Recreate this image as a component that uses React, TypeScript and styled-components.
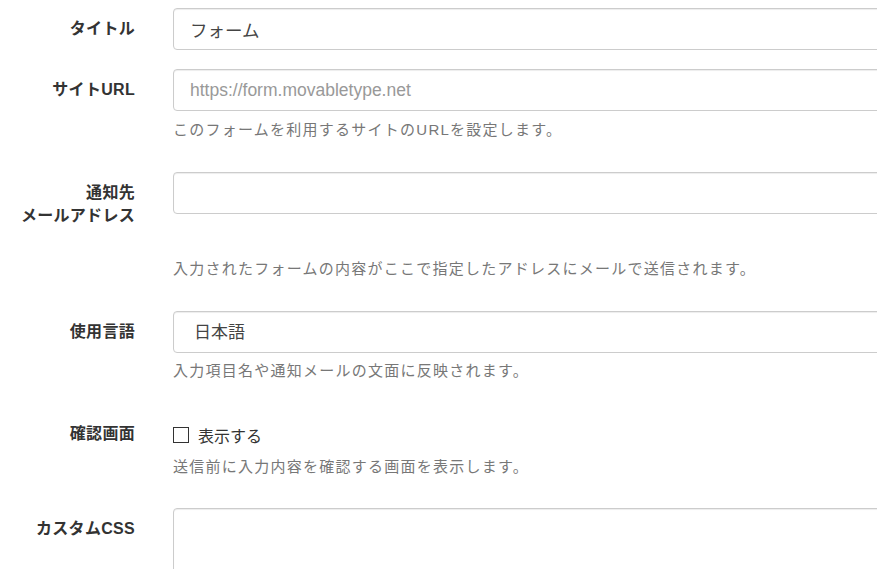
import React from "react";
import styled, { createGlobalStyle } from "styled-components";

const GlobalStyle = createGlobalStyle`
	html, body {
		margin: 0;
		padding: 0;
		background: #fff;
		overflow: hidden;
	}
	body {
		font-family: "Liberation Sans", "Noto Sans CJK JP", sans-serif;
		color: #333;
	}
`;

const App = () => {
	return (
		<Page>
			<GlobalStyle />
			<Form>
				<Row gap={19}>
					<Label>タイトル</Label>
					<Field>
						<TextInput defaultValue="フォーム" />
					</Field>
				</Row>
				<Row>
					<Label>サイトURL</Label>
					<Field>
						<TextInput placeholder="https://form.movabletype.net" />
						<Help>このフォームを利用するサイトのURLを設定します。</Help>
					</Field>
				</Row>
				<Row>
					<Label>
						通知先
						<br />
						メールアドレス
					</Label>
					<Field>
						<TextInput />
						<Help top={45}>
							入力されたフォームの内容がここで指定したアドレスにメールで送信されます。
						</Help>
					</Field>
				</Row>
				<Row>
					<Label>使用言語</Label>
					<Field>
						<Select defaultValue="ja">
							<option value="ja">日本語</option>
							<option value="en">English</option>
						</Select>
						<Help top={8}>入力項目名や通知メールの文面に反映されます。</Help>
					</Field>
				</Row>
				<Row gap={31}>
					<Label>確認画面</Label>
					<Field>
						<CheckLine>
							<CheckBox type="checkbox" />
							<span>表示する</span>
						</CheckLine>
						<Help top={1}>送信前に入力内容を確認する画面を表示します。</Help>
					</Field>
				</Row>
				<Row>
					<Label>カスタムCSS</Label>
					<Field>
						<TextArea />
					</Field>
				</Row>
			</Form>
		</Page>
	);
};

export default App;

interface RowProps {
	gap?: number;
}

interface HelpProps {
	top?: number;
}

const Page = styled.div`
	width: 877px;
	height: 569px;
	overflow: hidden;
`;

const Form = styled.div`
	width: 1100px;
	padding-top: 8px;
	display: flex;
	flex-direction: column;
`;

const Row = styled.div<RowProps>`
	display: grid;
	grid-template-columns: 135px 1fr;
	column-gap: 38px;
	margin-bottom: ${(props) => (props.gap ?? 32) + "px"};
`;

const Label = styled.div`
	text-align: right;
	font-size: 16px;
	font-weight: bold;
	line-height: 23px;
	padding-top: 9px;
	color: #333;
	letter-spacing: 0.3px;
`;

const Field = styled.div`
	display: flex;
	flex-direction: column;
`;

const TextInput = styled.input`
	box-sizing: border-box;
	height: 42px;
	width: 100%;
	padding: 0 16px;
	border: 1px solid #ccc;
	border-radius: 4px;
	box-shadow: inset 0 1px 1px rgba(0, 0, 0, 0.075);
	font-family: "Liberation Sans", "Noto Sans CJK JP", sans-serif;
	font-size: 17.5px;
	color: #444;
	outline: none;
	&::placeholder {
		color: #999;
	}
`;

const Select = styled.select`
	box-sizing: border-box;
	height: 42px;
	width: 100%;
	padding: 0 20px;
	border: 1px solid #ccc;
	border-radius: 4px;
	background: #fff;
	box-shadow: inset 0 1px 1px rgba(0, 0, 0, 0.075);
	font-family: "Liberation Sans", "Noto Sans CJK JP", sans-serif;
	font-size: 17px;
	color: #444;
	appearance: none;
	outline: none;
`;

const TextArea = styled.textarea`
	box-sizing: border-box;
	height: 140px;
	width: 100%;
	border: 1px solid #ccc;
	border-radius: 4px;
	box-shadow: inset 0 1px 1px rgba(0, 0, 0, 0.075);
	resize: none;
	outline: none;
`;

const Help = styled.div<HelpProps>`
	margin-top: ${(props) => (props.top ?? 9) + "px"};
	font-size: 15px;
	line-height: 20px;
	letter-spacing: 1.25px;
	color: #777;
`;

const CheckLine = styled.label`
	height: 43px;
	display: flex;
	align-items: center;
	gap: 9px;
	font-size: 16px;
	color: #333;
`;

const CheckBox = styled.input`
	appearance: none;
	margin: 0;
	width: 16px;
	height: 16px;
	border: 1px solid #333;
	border-radius: 0;
	background: #fff;
`;
